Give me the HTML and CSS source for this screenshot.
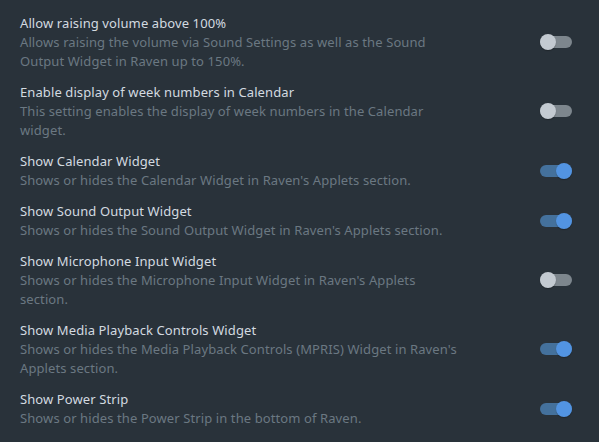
FILE: index.html
```html
<!DOCTYPE html>
<html>
<head>
<meta charset="utf-8">
<link rel="stylesheet" href="styles.css">
</head>
<body>
<div class="settings">
  <div class="row">
    <div class="text">
      <div class="title">Allow raising volume above 100%</div>
      <div class="desc">Allows raising the volume via Sound Settings as well as the Sound Output Widget in Raven up to 150%.</div>
    </div>
    <div class="switch"><span class="knob"></span></div>
  </div>
  <div class="row">
    <div class="text">
      <div class="title">Enable display of week numbers in Calendar</div>
      <div class="desc">This setting enables the display of week numbers in the Calendar widget.</div>
    </div>
    <div class="switch"><span class="knob"></span></div>
  </div>
  <div class="row">
    <div class="text">
      <div class="title">Show Calendar Widget</div>
      <div class="desc">Shows or hides the Calendar Widget in Raven's Applets section.</div>
    </div>
    <div class="switch on"><span class="knob"></span></div>
  </div>
  <div class="row">
    <div class="text">
      <div class="title">Show Sound Output Widget</div>
      <div class="desc">Shows or hides the Sound Output Widget in Raven's Applets section.</div>
    </div>
    <div class="switch on"><span class="knob"></span></div>
  </div>
  <div class="row">
    <div class="text">
      <div class="title">Show Microphone Input Widget</div>
      <div class="desc">Shows or hides the Microphone Input Widget in Raven's Applets section.</div>
    </div>
    <div class="switch"><span class="knob"></span></div>
  </div>
  <div class="row">
    <div class="text">
      <div class="title">Show Media Playback Controls Widget</div>
      <div class="desc">Shows or hides the Media Playback Controls (MPRIS) Widget in Raven's Applets section.</div>
    </div>
    <div class="switch on"><span class="knob"></span></div>
  </div>
  <div class="row">
    <div class="text">
      <div class="title">Show Power Strip</div>
      <div class="desc">Shows or hides the Power Strip in the bottom of Raven.</div>
    </div>
    <div class="switch on"><span class="knob"></span></div>
  </div>
</div>
</body>
</html>
```

FILE: styles.css
```css
html, body {
  margin: 0;
  background: #29323a;
}

body {
  font-family: "Noto Sans", "DejaVu Sans", sans-serif;
  font-size: 13px;
  line-height: 19px;
  letter-spacing: 0.1px;
}

.settings {
  display: flex;
  flex-direction: column;
  gap: 12px;
  padding: 13.5px 27px 0 20px;
}

.row {
  display: flex;
  align-items: center;
}

.text {
  flex: 0 1 438px;
}

.title {
  color: #d3dae0;
}

.desc {
  color: #6b7882;
}

.switch {
  margin-left: auto;
  position: relative;
  width: 32px;
  height: 12px;
  border-radius: 6px;
  background: #7d868d;
}

.switch .knob {
  position: absolute;
  top: -2px;
  left: 0;
  width: 16px;
  height: 16px;
  border-radius: 50%;
  background: #c3cad1;
  box-shadow: 0 1px 1px rgba(0, 0, 0, 0.25);
}

.switch.on {
  background: #44719c;
}

.switch.on .knob {
  left: 16px;
  background: #5294e2;
}
```
